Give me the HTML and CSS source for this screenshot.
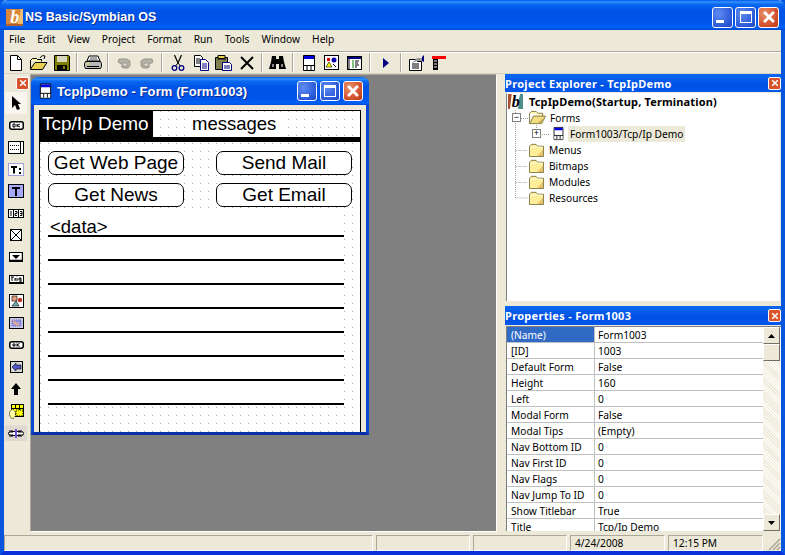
FILE: index.html
```html
<!DOCTYPE html>
<html lang="en">
<head>
<meta charset="utf-8">
<title>NS Basic/Symbian OS</title>
<link rel="stylesheet" href="styles.css">
</head>
<body>
<svg class="defs" width="0" height="0">
  <defs>
    <symbol id="i-logo" viewBox="0 0 16 16">
      <rect width="16" height="16" fill="#e8e4d8"/>
      <rect x="0" y="0" width="5" height="16" fill="#a8502c"/>
      <rect x="11" y="0" width="5" height="16" fill="#4f8f8a"/>
      <path d="M4 0h9L9 16H2z" fill="#fff"/>
      <text x="4" y="13.5" class="logo-b">b</text>
    </symbol>
    <symbol id="i-logo-title" viewBox="0 0 16 16">
      <rect width="16" height="16" fill="#e8e4d8"/>
      <rect x="0" y="0" width="6" height="16" fill="#d88838"/>
      <rect x="12" y="0" width="4" height="16" fill="#f0c070"/>
      <path d="M5 0h9l-3 16H3z" fill="#d88838"/>
      <text x="4" y="13.5" class="logo-w">b</text>
      <rect y="14" width="16" height="2" fill="#b06028"/>
    </symbol>
    <symbol id="i-form" viewBox="0 0 16 16">
      <path d="M2.500 .5h11v15h-11z" fill="#fff" stroke="#000"/>
      <rect x="3" y="1" width="10" height="3" fill="#0000e0"/>
      <path d="M3 11h10v4H3z" fill="#fff"/>
      <path d="M2.500 10.500h11M6 11v4M10 11v4" stroke="#000" fill="none"/>
    </symbol>
    <symbol id="i-folder" viewBox="0 0 16 16">
      <path d="M.5 4.500l2-2h5l2 2h6v11H.5z" fill="#ffee99" stroke="#807840"/>
      <path d="M9 15h6V8z" fill="#e8c070"/>
      <path d="M1.500 5.500h13" stroke="#fffce0" fill="none"/>
    </symbol>
    <symbol id="i-folder-open" viewBox="0 0 18 16">
      <path d="M.5 3.500l2-2h5l2 2h5v3" fill="#fff6b8" stroke="#807840"/>
      <path d="M.5 3.500v11h13l4-8h-13l-3 7" fill="#f4dc80" stroke="#807840"/>
      <path d="M9 14h4l3-6z" fill="#c8a850"/>
    </symbol>
    <symbol id="i-close-x" viewBox="0 0 10 10">
      <path d="M1.500 1.500l7 7M8.500 1.500l-7 7" stroke="#fff" stroke-width="2" fill="none"/>
    </symbol>
  </defs>
</svg>

<div class="app">
  <header class="titlebar">
    <svg class="title-logo" width="17" height="17"><use href="#i-logo-title"/></svg>
    <span class="title-text">NS Basic/Symbian OS</span>
    <div class="caption-btns">
      <button class="cap cap-blue"><span class="glyph-min"></span></button>
      <button class="cap cap-blue"><span class="glyph-max"></span></button>
      <button class="cap cap-red"><svg width="14" height="14"><use href="#i-close-x"/></svg></button>
    </div>
  </header>

  <nav class="menubar">
    <span>File</span><span>Edit</span><span>View</span><span>Project</span><span>Format</span><span>Run</span><span>Tools</span><span>Window</span><span>Help</span>
  </nav>

  <div class="toolbar">
    <div class="tb"><svg width="16" height="16"><path d="M2.500 .5h7l4 4v11h-11z" fill="#fff" stroke="#000"/><path d="M9.500 .5v4h4" fill="none" stroke="#000"/></svg></div>
    <div class="tb"><svg width="18" height="16"><path d="M.5 5.500l2-2h4l1 1h4v2" fill="#fff6a0" stroke="#000"/><path d="M.5 5v9.500h12l4.500-7H5L.5 14" fill="#e8d050" stroke="#000"/><path d="M10 3c1-2 3-3 5-2M15 1l-1 3" fill="none" stroke="#000"/></svg></div>
    <div class="tb"><svg width="16" height="16"><path d="M.5 .5h14l1 1v14H.5z" fill="#808000" stroke="#000"/><rect x="3" y="1" width="10" height="6" fill="#d8d8c0"/><rect x="3" y="10" width="10" height="5" fill="#000"/><rect x="9" y="11" width="2" height="3" fill="#808000"/></svg></div>
    <i class="sep"></i>
    <div class="tb"><svg width="18" height="16"><path d="M5 1h9l2 5H3z" fill="#fff" stroke="#000"/><path d="M6 3h7M5.500 5h8" stroke="#555"/><path d="M1.500 6.500h15l1 2v3l-1 2h-15l-1-2v-3z" fill="#b8b8b8" stroke="#000"/><path d="M3 11.500h12" stroke="#000"/><path d="M3 9h2" stroke="#ff0"/></svg></div>
    <i class="sep"></i>
    <div class="tb"><svg width="16" height="14"><path d="M3 3h8l3 2v5l-2 2H7L5 10h6V7H7v2L2 6z" fill="#b4b2a8" stroke="#98968c"/></svg></div>
    <div class="tb"><svg width="16" height="14"><path d="M13 3H5L2 5v5l2 2h5l2-2H5V7h4v2l5-3z" fill="#b4b2a8" stroke="#98968c"/></svg></div>
    <i class="sep"></i>
    <div class="tb"><svg width="14" height="16"><path d="M3.500 0L7 8l3.500-8" fill="none" stroke="#000" stroke-width="1.200"/><path d="M7 8L4.500 11M7 8l2.500 3" stroke="#000000" fill="none"/><circle cx="3.500" cy="13" r="2.300" fill="none" stroke="#000080" stroke-width="1.300"/><circle cx="10.500" cy="13" r="2.300" fill="none" stroke="#000080" stroke-width="1.300"/></svg></div>
    <div class="tb"><svg width="16" height="16"><path d="M1.500 .5h6l2 2v9h-8z" fill="#fff" stroke="#000"/><path d="M3 4h4M3 6h4M3 8h4" stroke="#000"/><path d="M7.500 4.500h5l3 3v8h-8z" fill="#fff" stroke="#000080"/><path d="M9 9h5M9 11h5M9 13h5" stroke="#000080"/></svg></div>
    <div class="tb"><svg width="17" height="16"><path d="M.5 2.500h12v12H.5z" fill="#808050" stroke="#000"/><path d="M3 .5h7v3H3z" fill="#e8d050" stroke="#000"/><path d="M2 4h9v1H2z" fill="#504830"/><path d="M7.500 7.500h7l2 2v6h-9z" fill="#fff" stroke="#000080"/><path d="M9 11h6M9 13h6" stroke="#000080"/></svg></div>
    <div class="tb"><svg width="14" height="14"><path d="M1 1l12 12M13 1L1 13" stroke="#000" stroke-width="2" fill="none"/></svg></div>
    <i class="sep"></i>
    <div class="tb"><svg width="17" height="15"><path d="M3 1h4v3h3V1h4l1 6 2 7h-7V9H7v5H0l2-7z" fill="#000"/><path d="M3 9h2v3H3zM12 9h2v3h-2z" fill="#888"/></svg></div>
    <i class="sep"></i>
    <div class="tb"><svg width="16" height="16"><use href="#i-form"/></svg></div>
    <div class="tb"><svg width="15" height="15"><rect x=".5" y=".5" width="14" height="14" fill="#fff" stroke="#000"/><rect x="3" y="3" width="3" height="3" fill="#d00"/><circle cx="10" cy="5" r="2.500" fill="#00a"/><path d="M5 7l3 5H2z" fill="#ff0" stroke="#000" stroke-width=".6"/><path d="M9 9l3 3" stroke="#000"/></svg></div>
    <div class="tb"><svg width="15" height="14"><rect x=".5" y=".5" width="14" height="13" fill="#fff" stroke="#000"/><rect x="1" y="1" width="13" height="2" fill="#000080"/><rect x="1" y="3" width="2" height="10" fill="#808080"/><path d="M5 5h2M5 7h2M5 9h2M5 11h2" stroke="#080"/><path d="M8 5h4M8 7h3M8 9h4M8 11h2" stroke="#000"/></svg></div>
    <i class="sep"></i>
    <div class="tb"><svg width="6" height="10"><path d="M0 0l6 5-6 5z" fill="#000080"/></svg></div>
    <i class="sep"></i>
    <div class="tb"><svg width="16" height="16"><path d="M.5 4.500h6l2 2h4v9H.5z" fill="#fff" stroke="#000"/><path d="M3 9h7M3 11h7M3 13h7" stroke="#000"/><path d="M3 8l5-5h5l1 3H8z" fill="#989898"/><path d="M13 2l2-2v7l-2-1z" fill="#000080"/></svg></div>
    <div class="tb"><svg width="15" height="14"><rect x="0" y="0" width="14" height="3" fill="#f00"/><rect x="1" y="3" width="5" height="11" fill="#000"/><path d="M2 5h3M2 8h3M2 11h3" stroke="#fff"/></svg></div>
  </div>

  <main class="workarea">
    <aside class="toolbox">
      <div class="toolbox-head"><button class="mini-close"><svg width="8" height="8"><use href="#i-close-x"/></svg></button></div>
      <div class="tool tool-on"><svg width="10" height="14"><path d="M1 0v12l3-3 2 5 3-1-2-5h3z" fill="#000"/></svg></div>
      <div class="tool"><svg width="15" height="9"><rect x=".75" y=".75" width="13.500" height="7.500" rx="2" fill="#fff" stroke="#000" stroke-width="1.500"/><path d="M4 3h2v3H4zM8 3v3M8 4.500l3-1.500M8 4.500l3 1.500" stroke="#000" fill="none"/></svg></div>
      <div class="tool"><svg width="16" height="13"><rect x=".5" y=".5" width="15" height="12" fill="#fff" stroke="#000"/><path d="M2 4.500h10M2 8.500h10" stroke="#000" stroke-dasharray="1 1"/><path d="M12.500 1v11" stroke="#000"/></svg></div>
      <div class="tool"><svg width="16" height="13"><rect x=".5" y=".5" width="15" height="12" fill="#fff" stroke="#5050d0" stroke-dasharray="1 1"/><path d="M3 3h6v2H7v5.500H5V5H3zM11 5h2v2h-2zM11 9h2v2h-2z" fill="#000"/></svg></div>
      <div class="tool"><svg width="16" height="14"><rect x=".5" y=".5" width="15" height="13" fill="#a8a8f8" stroke="#000"/><path d="M4 3h8v2H9v7H7V5H4z" fill="#000"/></svg></div>
      <div class="tool"><svg width="16" height="9"><rect width="16" height="9" fill="#000"/><rect x="1" y="1" width="4" height="7" fill="#fff"/><rect x="6" y="1" width="4" height="7" fill="#fff"/><rect x="11" y="1" width="4" height="7" fill="#fff"/><path d="M3 2v5M7 2.500h2v2H7v2h2M12 2.500h2v4h-2M12 4.500h2" stroke="#000" fill="none"/></svg></div>
      <div class="tool"><svg width="12" height="12"><rect x=".5" y=".5" width="11" height="11" fill="#fff" stroke="#000"/><path d="M1 1l10 10M11 1L1 11" stroke="#000"/></svg></div>
      <div class="tool"><svg width="14" height="10"><rect x=".5" y=".5" width="13" height="9" fill="#fff" stroke="#000"/><path d="M1 8.500h13M13.500 1v9" stroke="#000" stroke-width="1.500"/><path d="M3 3h8L7 7z" fill="#000"/></svg></div>
      <div class="tool"><svg width="15" height="9"><rect width="15" height="9" fill="#000"/><rect x="1" y="1" width="13" height="6" fill="#fff"/><path d="M2 2h3M3 2v4M6 3v3M6 4h1M8 3v3M8 1.500v.5M10 3h2v4h-2M10 3v2h2" stroke="#000" fill="none"/></svg></div>
      <div class="tool"><svg width="15" height="14"><rect x=".5" y=".5" width="14" height="13" fill="#fff" stroke="#000"/><rect x="3" y="2" width="5" height="5" fill="#e8a080" stroke="#000" stroke-width=".6"/><circle cx="11" cy="6" r="2.200" fill="#c03020" /><path d="M7 7l3 5H3z" fill="#70b0b0" stroke="#000" stroke-width=".6"/></svg></div>
      <div class="tool"><svg width="15" height="12"><rect x=".5" y=".5" width="14" height="11" fill="#c8c8e8" stroke="#000"/><rect x="3" y="3" width="9" height="6" fill="#9898e0" stroke="#6060c0" stroke-dasharray="1 1"/><path d="M3 2l5 4 3 1-2 2-4-2z" fill="#e0a888"/></svg></div>
      <div class="tool"><svg width="15" height="8"><rect x=".75" y=".75" width="13.500" height="6.500" rx="2" fill="#fff" stroke="#000" stroke-width="1.500"/><path d="M4 3h2v2H4zM8 2.500v3M8 4l2.500-1.500M8 4l2.500 1.500" stroke="#000" fill="none"/></svg></div>
      <div class="tool"><svg width="13" height="12"><rect x=".5" y=".5" width="12" height="11" fill="#d8d8d8" stroke="#000"/><path d="M2 6l4-4v2h5v4H6v2z" fill="#5058c8" stroke="#000" stroke-width=".6"/></svg></div>
      <div class="tool"><svg width="10" height="12"><path d="M5 0l5 6H7v6H3V6H0z" fill="#000"/></svg></div>
      <div class="tool"><svg width="15" height="15"><rect x="2.500" y=".5" width="12" height="12" fill="#ff0" stroke="#000"/><path d="M2 4.500h12M6.500 1v4M10.500 1v4M10.500 5v8M6.500 8.500h8" stroke="#000"/><path d="M7 6h7v6H7z" fill="#ff0" stroke="#000" stroke-dasharray="1 1"/><ellipse cx="3.500" cy="10" rx="3" ry="4.500" fill="#ffffa0" stroke="#000" stroke-dasharray="1 1"/></svg></div>
      <div class="tool tool-grey"><svg width="16" height="9"><rect x=".5" y="2.500" width="15" height="4" rx="2" fill="#fff" stroke="#000"/><path d="M2 1v7M4 1v7M11 1v7M13 1v7" stroke="#000" stroke-dasharray="1 1"/><rect x="7" y="0" width="2" height="9" fill="#7050d0"/></svg></div>
    </aside>

    <section class="mdi">
      <article class="form-win">
        <div class="form-title">
          <svg width="15" height="16"><use href="#i-form"/></svg>
          <span class="form-title-text">TcpIpDemo - Form (Form1003)</span>
          <div class="form-caps">
            <button class="cap cap-blue"><span class="glyph-min"></span></button>
            <button class="cap cap-blue"><span class="glyph-max"></span></button>
            <button class="cap cap-red"><svg width="14" height="14"><use href="#i-close-x"/></svg></button>
          </div>
        </div>
        <div class="form-client">
          <div class="canvas">
            <div class="pda-head">
              <span class="pda-title">Tcp/Ip Demo</span>
              <span class="pda-label">messages</span>
            </div>
            <div class="pda-rule"></div>
            <div class="pda-buttons">
              <span class="pda-btn">Get Web Page</span>
              <span class="pda-btn">Send Mail</span>
              <span class="pda-btn">Get News</span>
              <span class="pda-btn">Get Email</span>
            </div>
            <div class="pda-field">
              <div class="pda-line">&lt;data&gt;</div>
              <div class="pda-line"></div>
              <div class="pda-line"></div>
              <div class="pda-line"></div>
              <div class="pda-line"></div>
              <div class="pda-line"></div>
              <div class="pda-line"></div>
              <div class="pda-line"></div>
            </div>
          </div>
        </div>
      </article>
    </section>

    <aside class="side">
      <section class="explorer">
        <div class="panel-title"><span>Project Explorer - TcpIpDemo</span><button class="mini-close"><svg width="8" height="8"><use href="#i-close-x"/></svg></button></div>
        <div class="tree">
          <svg class="tree-lines" width="60" height="120"><path d="M8.500 16v4M8.500 29v75h12M14 24.500h7M29.500 31v5M33 40.500h10M8.500 56.500h12M8.500 72.500h12M8.500 88.500h12" fill="none" stroke="#a0a090" stroke-dasharray="1 1"/></svg>
          <div class="node node-root"><svg width="15" height="15"><use href="#i-logo"/></svg><b>TcpIpDemo(Startup, Termination)</b></div>
          <div class="node node-1"><span class="expander">−</span><svg width="17" height="15"><use href="#i-folder-open"/></svg><span>Forms</span></div>
          <div class="node node-2"><span class="expander">+</span><svg width="13" height="15"><use href="#i-form"/></svg><span class="node-sel">Form1003/Tcp/Ip Demo</span></div>
          <div class="node node-3"><svg width="15" height="15"><use href="#i-folder"/></svg><span>Menus</span></div>
          <div class="node node-3"><svg width="15" height="15"><use href="#i-folder"/></svg><span>Bitmaps</span></div>
          <div class="node node-3"><svg width="15" height="15"><use href="#i-folder"/></svg><span>Modules</span></div>
          <div class="node node-3"><svg width="15" height="15"><use href="#i-folder"/></svg><span>Resources</span></div>
        </div>
      </section>
      <section class="props">
        <div class="panel-title panel-title-tall"><span>Properties - Form1003</span><button class="mini-close"><svg width="8" height="8"><use href="#i-close-x"/></svg></button></div>
        <div class="grid-wrap">
          <div class="grid">
            <div class="row row-sel"><span>(Name)</span><span>Form1003</span></div>
            <div class="row"><span>[ID]</span><span>1003</span></div>
            <div class="row"><span>Default Form</span><span>False</span></div>
            <div class="row"><span>Height</span><span>160</span></div>
            <div class="row"><span>Left</span><span>0</span></div>
            <div class="row"><span>Modal Form</span><span>False</span></div>
            <div class="row"><span>Modal Tips</span><span>(Empty)</span></div>
            <div class="row"><span>Nav Bottom ID</span><span>0</span></div>
            <div class="row"><span>Nav First ID</span><span>0</span></div>
            <div class="row"><span>Nav Flags</span><span>0</span></div>
            <div class="row"><span>Nav Jump To ID</span><span>0</span></div>
            <div class="row"><span>Show Titlebar</span><span>True</span></div>
            <div class="row"><span>Title</span><span>Tcp/Ip Demo</span></div>
          </div>
          <div class="scrollbar">
            <div class="sb-btn"><svg width="7" height="4"><path d="M3.500 0L7 4H0z" fill="#000"/></svg></div>
            <div class="sb-btn"></div>
            <div class="sb-track"></div>
            <div class="sb-btn"><svg width="7" height="4"><path d="M0 0h7L3.500 4z" fill="#000"/></svg></div>
          </div>
        </div>
      </section>
    </aside>
  </main>

  <footer class="statusbar">
    <span class="pane pane-main"></span>
    <span class="pane pane-a"></span>
    <span class="pane pane-b"></span>
    <span class="pane pane-date">4/24/2008</span>
    <span class="pane pane-time">12:15 PM</span>
    <span class="grip"><svg width="14" height="14"><path d="M13 2L2 13M13 6l-7 7M13 10l-3 3" stroke="#aca899" stroke-width="1.500" fill="none"/></svg></span>
  </footer>
</div>
</body>
</html>
```

FILE: styles.css
```css
* { box-sizing: border-box; }
html, body { margin: 0; padding: 0; }
body {
  width: 785px;
  height: 555px;
  overflow: hidden;
  font-family: "Noto Sans", "DejaVu Sans", sans-serif;
  font-size: 10.200px;
  color: #000;
  background: #ece9d8;
}
svg { display: block; flex: none; }
.defs { position: absolute; }
.logo-b { font: italic bold 17px "Liberation Serif", serif; fill: #000; }
.logo-w { font: italic bold 17px "Liberation Serif", serif; fill: #fff; }

button { padding: 0; margin: 0; font: inherit; }

.app {
  width: 785px;
  height: 555px;
  display: flex;
  flex-direction: column;
  background: #ece9d8;
  border-left: 4px solid #0855dd;
  border-right: 4px solid #0855dd;
  border-bottom: 4px solid #0831d9;
}

/* Title bar */
.titlebar {
  height: 30px;
  margin: 0 -4px;
  padding: 4px 6px 0 6px;
  display: flex;
  align-items: center;
  gap: 2px;
  flex: none;
  background: linear-gradient(#0058ee 0, #3593ff 2px, #0a6af0 4px, #0053e6 10px, #0055ea 22px, #0062f8 27px, #0047cf 30px);
  border-radius: 7px 7px 0 0;
}
.title-text {
  font: bold 12.500px "Liberation Sans", Arial, sans-serif;
  color: #fff;
  text-shadow: 1px 1px 0 #0a2a90;
}
.caption-btns { margin-left: auto; display: flex; gap: 2px; }
.caption-btns .cap { width: 21px; height: 21px; }
.cap {
  width: 20px;
  height: 20px;
  border: 1px solid #fff;
  border-radius: 3px;
  display: flex;
  align-items: center;
  justify-content: center;
  position: relative;
}
.cap-blue { background: radial-gradient(circle at 30% 30%, #5f8cf0, #2a58d8 70%, #1c44c0); }
.cap-red { background: radial-gradient(circle at 30% 30%, #e8906c, #d2502c 65%, #b83818); }
.glyph-min { width: 8px; height: 3px; background: #fff; margin: 8px 5px 0 0; }
.glyph-max { width: 12px; height: 12px; border: 1px solid #fff; border-top-width: 3px; }

/* Menu */
.menubar {
  height: 22px;
  flex: none;
  display: flex;
  align-items: center;
  gap: 12px;
  padding: 0 0 3px 5px;
  background: #ece9d8;
  border-bottom: 1px solid #aca899;
  box-shadow: 0 1px 0 #fff;
  position: relative;
}

/* Toolbar */
.toolbar {
  height: 22px;
  flex: none;
  display: flex;
  align-items: center;
  border-bottom: 1px solid #d8d4c4;
}
.tb { width: 23px; height: 21px; display: flex; align-items: center; justify-content: center; flex: none; }
.sep { display: block; width: 8px; height: 19px; flex: none; position: relative; background: linear-gradient(to right, transparent 3px, #aca899 3px, #aca899 4px, #fff 4px, #fff 5px, transparent 5px); }

/* Main */
.workarea { flex: 1; display: flex; min-height: 0; height: 457px; }

.toolbox { width: 26px; flex: none; display: flex; flex-direction: column; }
.toolbox-head { height: 18px; display: flex; justify-content: flex-end; align-items: center; padding-right: 1px; }
.tool { width: 22px; height: 22px; margin-left: 1px; display: flex; align-items: center; justify-content: center; flex: none; }
.tool-on { background: #f7f5ee; }
.tool-grey { background: #dedad2; height: 16px; margin-top: 3px; }

.mini-close {
  width: 13px;
  height: 13px;
  border: 1px solid #fff;
  border-radius: 2px;
  background: #d8522c;
  display: flex;
  align-items: center;
  justify-content: center;
  flex: none;
}

.mdi {
  flex: none;
  width: 467px;
  height: 458px;
  background: #808080;
  border-left: 1px solid #aca899;
  border-top: 1px solid #aca899;
  border-bottom: 1px solid #fff;
  border-right: 1px solid #fff;
  position: relative;
}

/* Form window (on the MDI desktop) */
.form-win {
  position: absolute;
  left: 0;
  top: 2px;
  width: 338px;
  height: 358px;
  display: flex;
  flex-direction: column;
  background: #ece9d8;
  border: 3px solid #0847d0;
  border-top: 0;
  border-bottom-color: #0830a8;
  border-radius: 7px 7px 0 0;
}
.form-title {
  height: 28px;
  margin: 0 -3px;
  padding: 0 6px 0 7px;
  display: flex;
  align-items: center;
  gap: 4px;
  flex: none;
  background: linear-gradient(#0058ee 0, #3593ff 2px, #0a6af0 4px, #0053e6 10px, #0055ea 22px, #0062f8 26px, #0047cf 28px);
  border-radius: 7px 7px 0 0;
}
.form-title-text {
  font: bold 13px "Liberation Sans", Arial, sans-serif;
  letter-spacing: .1px;
  color: #fff;
  text-shadow: 1px 1px 0 #0a2a90;
}
.form-caps { margin-left: auto; display: flex; gap: 3px; }
.form-client {
  flex: 1;
  min-height: 0;
  padding: 5px 5px 0 5px;
  overflow: hidden;
}
.canvas {
  height: 100%;
  border: 1px solid #000;
  border-bottom: 0;
  background-color: #fff;
  background-image: radial-gradient(circle at .5px .5px, #a8a8a0 .7px, transparent .8px);
  background-size: 8px 8px;
  font-family: "Liberation Sans", Arial, sans-serif;
}
.pda-head { height: 26px; display: flex; align-items: center; }
.pda-title {
  width: 113px;
  height: 26px;
  line-height: 26px;
  padding-left: 2px;
  background: #000;
  color: #fff;
  font-size: 19px;
}
.pda-label {
  margin-left: 39px;
  width: 90px;
  background: #fff;
  font-size: 18.500px;
  line-height: 24px;
}
.pda-rule { height: 5px; background: #000; }
.pda-buttons {
  margin: 9px 0 0 8px;
  display: grid;
  grid-template-columns: 136px 136px;
  grid-auto-rows: 24px;
  column-gap: 32px;
  row-gap: 8px;
}
.pda-btn {
  border: 1px solid #000;
  border-radius: 7px;
  background: #fff;
  text-align: center;
  font-size: 19px;
  line-height: 22px;
}
.pda-field { margin: 6px 0 0 8px; width: 296px; background: #fff; }
.pda-line {
  height: 24px;
  border-bottom: 2px solid #000;
  padding-left: 2px;
  font-size: 18.500px;
  line-height: 27px;
}

/* Side panels */
.side {
  width: 276px;
  margin-left: 8px;
  flex: none;
  display: flex;
  flex-direction: column;
}
.panel-title {
  height: 18px;
  flex: none;
  display: flex;
  align-items: center;
  justify-content: space-between;
  background: linear-gradient(#0a68f0, #0050e4 60%, #0058ee);
  color: #fff;
  font: bold 11px "Noto Sans", sans-serif;
  letter-spacing: .3px;
}
.panel-title-tall { height: 19px; }
.explorer { height: 232px; flex: none; }
.tree {
  height: 208px;
  margin: 1px 1px 0 1px;
  background: #fff;
  border-left: 1px solid #808080;
  border-top: 1px solid #fff;
  position: relative;
}
.tree-lines { position: absolute; left: 0; top: 0; }
.node { height: 16px; display: flex; align-items: center; position: relative; padding-bottom: 1px; }
.node-root { padding-left: 1px; gap: 6px; }
.node-root b { font: bold 11px "Noto Sans", sans-serif; letter-spacing: .15px; }
.node-1 { padding-left: 5px; }
.node-1 svg { margin-left: 8px; margin-right: 4px; }
.node-2 { padding-left: 25px; }
.node-2 svg { margin-left: 11px; margin-right: 3px; }
.node-3 { padding-left: 22px; gap: 5px; }
.node-sel { background: #ece9d8; padding: 0 2px; height: 16px; line-height: 16px; margin-top: 1px; }
.expander {
  width: 9px;
  height: 9px;
  border: 1px solid #808080;
  background: #fff;
  font: 9px/7px "Liberation Sans", sans-serif;
  text-align: center;
  flex: none;
}

.props { flex: 1; min-height: 0; display: flex; flex-direction: column; }
.grid-wrap {
  height: 205px;
  margin-top: 1px;
  margin-left: 1px;
  display: flex;
  border-left: 1px solid #808080;
  border-top: 1px solid #808080;
  background: #fff;
  overflow: hidden;
}
.grid { width: 256px; flex: none; overflow: hidden; }
.row {
  height: 16px;
  display: grid;
  grid-template-columns: 88px 1fr;
  border-bottom: 1px solid #c0c0c0;
  line-height: 17px;
}
.row span { padding-left: 4px; border-right: 1px solid #c0c0c0; white-space: nowrap; overflow: hidden; }
.row span:last-child { border-right: 0; padding-left: 3px; }
.row-sel span:first-child { background: #316ac5; color: #fff; }
.scrollbar {
  width: 17px;
  flex: none;
  display: flex;
  flex-direction: column;
  background-color: #f5f3ea;
  background-image: repeating-linear-gradient(45deg, #ece9d8 0 1px, #fdfcf6 1px 2px);
}
.sb-btn {
  height: 17px;
  flex: none;
  background: #ece9d8;
  border: 1px solid;
  border-color: #fff #716f64 #716f64 #fff;
  display: flex;
  align-items: center;
  justify-content: center;
}
.sb-track { flex: 1; }

/* Status bar */
.statusbar {
  height: 16px;
  flex: none;
  display: flex;
  gap: 3px;
  background: #ece9d8;
}
.pane {
  height: 16px;
  border: 1px solid;
  border-color: #aca899 #fff #fff #aca899;
  padding-left: 4px;
  line-height: 15px;
}
.pane-main { width: 369px; }
.pane-a { width: 94px; }
.pane-b { width: 94px; }
.pane-date { width: 95px; }
.pane-time { width: 95px; }
.grip { flex: 1; display: flex; justify-content: flex-end; align-items: flex-end; }
```
